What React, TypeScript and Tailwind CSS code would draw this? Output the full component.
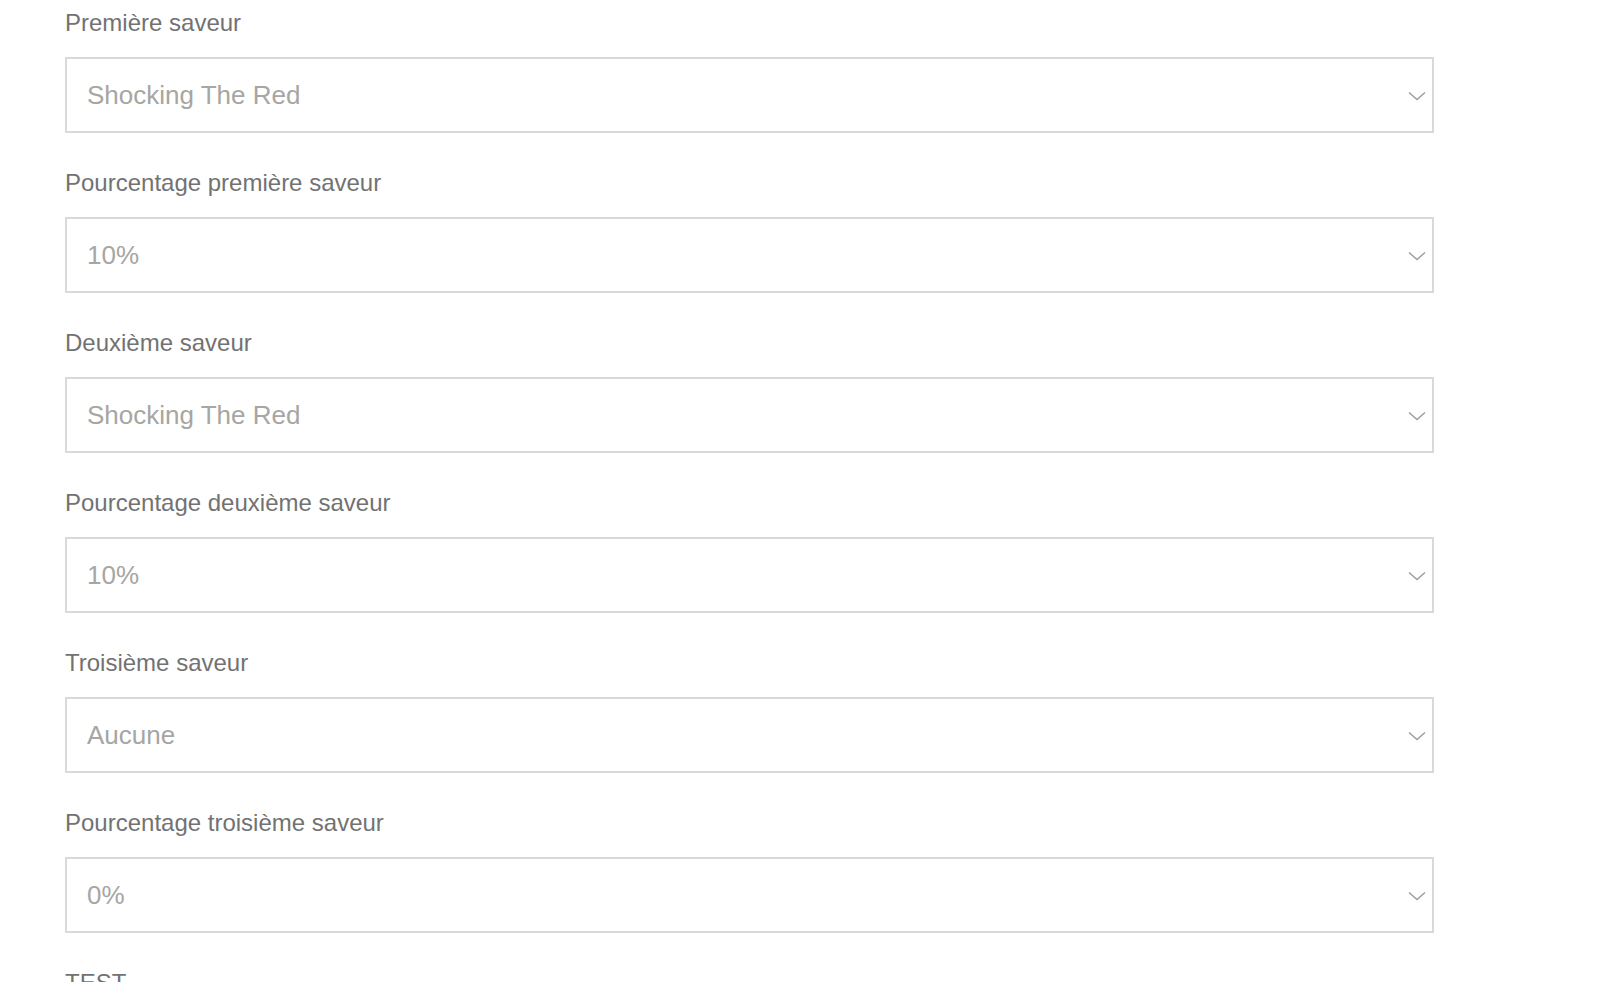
import { useState } from 'react'

const fields = [
  { label: 'Première saveur', value: 'Shocking The Red' },
  { label: 'Pourcentage première saveur', value: '10%' },
  { label: 'Deuxième saveur', value: 'Shocking The Red' },
  { label: 'Pourcentage deuxième saveur', value: '10%' },
  { label: 'Troisième saveur', value: 'Aucune' },
  { label: 'Pourcentage troisième saveur', value: '0%' },
  { label: 'TEST', value: '' },
]

function Chevron() {
  return (
    <svg width="18" height="10" viewBox="0 0 18 10" fill="none" className="shrink-0">
      <polyline points="1,1.5 9,8.5 17,1.5" stroke="#9c9c9c" strokeWidth="1.4" />
    </svg>
  )
}

export default function App() {
  const [values] = useState(fields)

  return (
    <div className="min-h-screen bg-white pl-[65px] pt-[5px] font-['Liberation_Sans',Arial,sans-serif]">
      <div className="w-[1369px]">
        {values.map((f, i) => (
          <div key={i} className="mb-[32px]">
            <p className="text-[24px] leading-9 text-[#727272] mb-4">{f.label}</p>
            <div className="h-[76px] border-2 border-[#d9d9d9] bg-white flex items-center pl-[20px] pr-[6px] pt-[1px]">
              <span className="flex-1 text-[26px] text-[#a6a6a2]">{f.value}</span>
              <Chevron />
            </div>
          </div>
        ))}
      </div>
    </div>
  )
}
